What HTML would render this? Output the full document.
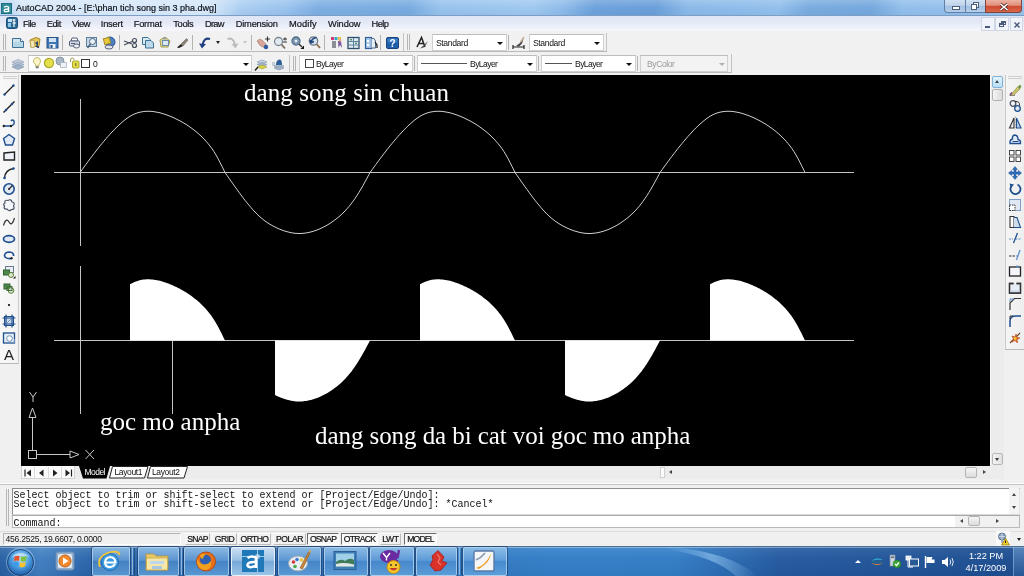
<!DOCTYPE html>
<html><head><meta charset="utf-8"><title>AutoCAD 2004</title>
<style>
*{box-sizing:border-box;margin:0;padding:0}
html,body{width:1024px;height:576px;overflow:hidden;background:#f0f0f0;font-family:"Liberation Sans",sans-serif;}
#root{position:relative;width:1024px;height:576px;overflow:hidden;will-change:transform;transform:translateZ(0)}
.abs{position:absolute}
svg{position:absolute;overflow:visible}
/* title bar */
#title{left:0;top:0;width:1024px;height:16px;background:
 linear-gradient(180deg,rgba(255,255,255,.18) 0,rgba(255,255,255,0) 50%,rgba(40,80,140,.06) 100%),
 linear-gradient(100deg,#c2dbf5 0,#bcd8f4 21%,#a5cbf0 25%,#9bc4ee 28%,#7fb0e3 31%,#7aace1 40%,#98c3ed 43%,#a0c9f0 52%,#8fbcea 55%,#6ea3dc 58%,#6ba0da 64%,#8bbae9 67%,#93c0ec 76%,#7aacdf 79%,#76a9de 85%,#92bfeb 88%,#98c4ee 100%);border-bottom:1px solid #7c9dc4}
#title .glow{left:10px;top:0;width:230px;height:15px;background:linear-gradient(90deg,rgba(236,245,253,0) 0,rgba(236,245,253,.55) 5%,rgba(236,245,253,.55) 85%,rgba(236,245,253,0) 100%)}
#title .txt{left:16px;top:3px;font-size:9px;line-height:11px;color:#10141a;white-space:nowrap;-webkit-text-stroke:.2px #10141a}
.wb{top:0;height:13px;border:1px solid #5f7fa6;border-top:none;}
/* menu */
#menu{left:0;top:16px;width:1024px;height:15px;background:linear-gradient(180deg,#dfe6f5 0%,#e3e8f6 40%,#eef1fa 75%,#f6f7fc 100%);}
#menu span{position:absolute;top:3px;font-size:9.3px;line-height:11px;color:#15171c;white-space:nowrap;-webkit-text-stroke:.2px #15171c}
/* toolbars */
#tb1{left:0;top:31px;width:1024px;height:22px;background:#f1f1f1}
#tb2{left:0;top:53px;width:1024px;height:22px;background:#f1f1f1}
.sepv{position:absolute;width:1px;background:#b4b4b4}
.grip{position:absolute;width:3px;border-left:1px solid #b6b6b6;border-right:1px solid #b6b6b6}
.dd{position:absolute;background:#fff;border:1px solid #d0d0d0;border-top-color:#bdbdbd;font-size:8.6px;line-height:10px;color:#111;white-space:nowrap}
.dd .t{position:absolute;top:3px}
.dd .ar{position:absolute;width:0;height:0;margin-left:-1px;border-left:3.5px solid transparent;border-right:3.5px solid transparent;border-top:3.5px solid #111}
/* drawing */
#draw{left:21px;top:75px;width:969px;height:391px;background:#000}
#lefttb{left:0;top:75px;width:21px;height:404px;background:#f0f0f0}
#vscroll{left:990px;top:75px;width:14px;height:391px;background:#ececec}
#righttb{left:1004px;top:75px;width:20px;height:404px;background:#f0f0f0}
#tabs{left:21px;top:466px;width:983px;height:13px;background:#ececec}
#cmd{left:0;top:479px;width:1024px;height:52px;background:#f0f0f0}
#status{left:0;top:531px;width:1024px;height:15px;background:#f0f0f0}
#task{left:0;top:546px;width:1024px;height:30px;background:linear-gradient(180deg,#6a9bd0 0%,#4a82c0 6%,#3470b4 40%,#2a64a8 100%);}
.ctext{font-family:"Liberation Serif",serif;color:#fff;white-space:nowrap;position:absolute;transform-origin:0 0}
.mono{font-family:"Liberation Mono",monospace;font-size:10px;line-height:10px;color:#111;white-space:pre;position:absolute}
.sb{position:absolute;top:2px;height:12px;font-size:8.6px;line-height:10px;color:#111;text-align:center;white-space:nowrap;border:1px solid;border-color:#fbfbfb #bdbdbd #bdbdbd #fbfbfb;-webkit-text-stroke:.2px #111}
.sb.on{border-color:#6a6a6a #fff #fff #6a6a6a;background:#f7f7f7}
.tbtn{position:absolute;top:1px;height:29px;border-radius:2px}
</style></head><body><div id="root">
<div id="title" class="abs"><div class="abs glow"></div>
<svg style="left:1px;top:3px" width="11" height="11" viewBox="0 0 11 11"><rect x="0" y="0" width="11" height="11" fill="#1f6f80"/><rect x="1" y="1" width="9" height="9" fill="#2f8a9a"/><path d="M3 4.2 Q5.5 2.5 7.6 4 V9 M7.6 6 Q3 5.8 3.2 7.8 Q3.6 9.4 7.6 8.2" stroke="#fff" stroke-width="1.3" fill="none"/></svg>
<div class="abs txt">AutoCAD 2004 - [E:\phan tich song sin 3 pha.dwg]</div>
<div class="abs wb" style="left:944px;width:22px;border-radius:0 0 0 4px;background:linear-gradient(180deg,#d3e2f2 0,#bfd3ea 45%,#a3bfe0 50%,#b4cfeb 100%)"><div class="abs" style="left:7px;top:6px;width:8px;height:4px;background:#fff;border:1px solid #4c5f78"></div></div>
<div class="abs wb" style="left:965px;width:21px;background:linear-gradient(180deg,#d3e2f2 0,#bfd3ea 45%,#a3bfe0 50%,#b4cfeb 100%)"><div class="abs" style="left:7px;top:2px;width:6px;height:6px;border:1px solid #4c5f78;background:#fff"></div><div class="abs" style="left:5px;top:4px;width:6px;height:6px;border:1px solid #4c5f78;background:#fff"></div></div>
<div class="abs wb" style="left:985px;width:37px;border-radius:0 0 4px 0;border-color:#7b453e;background:linear-gradient(180deg,#ecb3a3 0,#e08f7a 45%,#cf4a2f 50%,#d9674a 100%)"><svg style="left:13px;top:3px" width="10" height="8" viewBox="0 0 10 8"><path d="M1.5 1 L8.5 7 M8.5 1 L1.5 7" stroke="#5a2a26" stroke-width="3"/><path d="M1.5 1 L8.5 7 M8.5 1 L1.5 7" stroke="#fff" stroke-width="1.6"/></svg></div>
</div>
<div id="menu" class="abs"><svg style="left:6px;top:1px" width="12" height="12" viewBox="0 0 12 12"><rect x="0.5" y="0.5" width="11" height="11" rx="2" fill="#2a6a94" stroke="#1d4f74"/><rect x="2" y="2" width="4" height="3" fill="#bfe0f8"/><rect x="2" y="6" width="3" height="4" fill="#8cc6ee"/><path d="M6.5 3 L9.5 3 M8 2 V10 M6.5 6 H10" stroke="#fff" stroke-width="1.2"/></svg><span class="mi" style="letter-spacing:-0.58px;left:23px">File</span><span class="mi" style="letter-spacing:-0.51px;left:46.75px">Edit</span><span class="mi" style="letter-spacing:-0.49px;left:72px">View</span><span class="mi" style="letter-spacing:-0.2px;left:100.75px">Insert</span><span class="mi" style="letter-spacing:-0.24px;left:133.75px">Format</span><span class="mi" style="letter-spacing:-0.3px;left:173.25px">Tools</span><span class="mi" style="letter-spacing:-0.73px;left:205px">Draw</span><span class="mi" style="letter-spacing:-0.21px;left:235.75px">Dimension</span><span class="mi" style="letter-spacing:0.07px;left:289px">Modify</span><span class="mi" style="letter-spacing:-0.12px;left:328px">Window</span><span class="mi" style="letter-spacing:-0.54px;left:371.5px">Help</span><div class="abs" style="left:981px;top:1px;width:14px;height:14px;border:1px solid #cfd6e4;background:#f1f3fa"><div class="abs" style="left:3px;top:8px;width:5px;height:2px;background:#4a5a78"></div></div><div class="abs" style="left:995px;top:1px;width:14px;height:14px;border:1px solid #cfd6e4;background:#f1f3fa"><div class="abs" style="left:5px;top:3px;width:5px;height:4px;border:1px solid #4a5a78;border-top-width:2px"></div><div class="abs" style="left:3px;top:5px;width:5px;height:4px;border:1px solid #4a5a78;background:#f1f3fa;border-top-width:2px"></div></div><div class="abs" style="left:1010px;top:1px;width:13px;height:14px;border:1px solid #cfd6e4;background:#f1f3fa"><svg style="left:3px;top:4px" width="6" height="6" viewBox="0 0 6 6"><path d="M0.5 0.5 L5.5 5.5 M5.5 0.5 L0.5 5.5" stroke="#4a5a78" stroke-width="1.4"/></svg></div></div>
<div id="tb1" class="abs"><div class="grip" style="left:3px;top:3px;height:16px"></div><svg style="left:10px;top:4px" width="16" height="16" viewBox="0 0 16 16"><path d="M2.5 3.5 H10.5 L13.5 6.5 V12.5 H2.5Z" fill="#cfe3ee" stroke="#3c6f94"/><path d="M10.5 3.5 V6.5 H13.5" fill="#fff" stroke="#3c6f94"/><rect x="3.5" y="7" width="9" height="5" fill="#a9cfe0" opacity=".7"/></svg><svg style="left:27px;top:4px" width="16" height="16" viewBox="0 0 16 16"><path d="M3 5 L9 2.5 L13 4 L12 11 L4 12Z" fill="#e3c75a" stroke="#a78a2a"/><path d="M3 6 L7 5 L8 12 L4 12.5Z" fill="#f1e7b8" stroke="#a78a2a" stroke-width=".6"/><path d="M8 8 L11 6 L11 11Z" fill="#24457a"/><path d="M9 11 L12 12.5" stroke="#1d2d50" stroke-width="1.5"/></svg><svg style="left:44px;top:4px" width="16" height="16" viewBox="0 0 16 16"><rect x="3" y="2.5" width="11" height="10.5" fill="#3f76b5" stroke="#2a5389"/><rect x="5" y="3" width="7" height="4" fill="#cfe2f3"/><rect x="5.5" y="9" width="6" height="4" fill="#e7eef7"/><rect x="6.5" y="10" width="2" height="3" fill="#2a5389"/></svg><svg style="left:67px;top:4px" width="16" height="16" viewBox="0 0 16 16"><path d="M5 3 H10 L11 6 H4Z" fill="#fff" stroke="#55607a"/><rect x="2.5" y="6" width="10" height="5" rx="1" fill="#d7dbe6" stroke="#55607a"/><ellipse cx="9.5" cy="11" rx="3" ry="2" fill="#eef0f5" stroke="#55607a"/><rect x="4" y="8" width="4" height="1" fill="#55607a"/></svg><svg style="left:84px;top:4px" width="16" height="16" viewBox="0 0 16 16"><rect x="2.5" y="2.5" width="10" height="9" fill="#c7d9e8" stroke="#5c7f9e"/><circle cx="8.5" cy="6.5" r="3" fill="#e8f2fa" stroke="#50657c"/><path d="M6.5 9 L3.5 13" stroke="#50657c" stroke-width="1.6"/></svg><svg style="left:101px;top:4px" width="16" height="16" viewBox="0 0 16 16"><circle cx="9" cy="7" r="5" fill="#4a7fc0" stroke="#2b5590"/><rect x="3" y="3" width="6" height="6" fill="#e8c83a" stroke="#a18a25" transform="rotate(-15 6 6)"/><ellipse cx="8" cy="12" rx="4" ry="2" fill="#dfe3ee" stroke="#55607a"/></svg><svg style="left:123px;top:4px" width="16" height="16" viewBox="0 0 16 16"><path d="M1 6 L9 9 M1 10 L9 6.5" stroke="#444c5c" stroke-width="1.2"/><circle cx="11.5" cy="5.5" r="2" fill="none" stroke="#444c5c" stroke-width="1.2"/><circle cx="11.5" cy="10.5" r="2" fill="none" stroke="#444c5c" stroke-width="1.2"/></svg><svg style="left:140px;top:4px" width="16" height="16" viewBox="0 0 16 16"><path d="M2.5 2.5 H8 L10 4.5 V9.5 H2.5Z" fill="#dbe9f3" stroke="#3c6f94"/><path d="M5.5 5.5 H11 L13.5 8 V13 H5.5Z" fill="#bcd9ea" stroke="#3c6f94"/></svg><svg style="left:157px;top:4px" width="16" height="16" viewBox="0 0 16 16"><path d="M3 5 L8 2 L13 6 L11 12 L4 12Z" fill="#e6e0a8" stroke="#a59b48"/><rect x="5.5" y="5.5" width="6" height="5" fill="#dbe9f3" stroke="#6a8aa5"/><rect x="6" y="2.5" width="3.5" height="2" fill="#9aa3ad"/></svg><svg style="left:175px;top:4px" width="16" height="16" viewBox="0 0 16 16"><path d="M2 12.5 L6 9 L8 11 L4 13Z" fill="#222"/><path d="M6 9 L11.5 3.5 L13 5 L8 11Z" fill="#8a8378" stroke="#5c564c" stroke-width=".5"/></svg><svg style="left:197px;top:4px" width="16" height="16" viewBox="0 0 16 16"><path d="M13 4 Q7 2 5.5 10" fill="none" stroke="#1f3f80" stroke-width="2.2"/><path d="M2 8.5 L9 9 L5 13.5Z" fill="#1f3f80"/></svg><svg style="left:225px;top:4px" width="16" height="16" viewBox="0 0 16 16"><path d="M2.5 4 Q8.5 2 10 10" fill="none" stroke="#bdbdbd" stroke-width="2.2"/><path d="M13.5 8.5 L6.5 9 L10.5 13.5Z" fill="#bdbdbd"/></svg><svg style="left:255px;top:4px" width="16" height="16" viewBox="0 0 16 16"><path d="M2 6 Q4 3 7 5 L11 9 Q12 12 9 12.5 Q5 12 2 6Z" fill="#d9a79a" stroke="#a0756b" stroke-width=".6"/><circle cx="11" cy="12" r="2.2" fill="#2b5aa0"/><path d="M10 4 H15 M12.5 1.5 V6.5" stroke="#333" stroke-width="1.1"/></svg><svg style="left:272px;top:4px" width="16" height="16" viewBox="0 0 16 16"><circle cx="6.5" cy="6.5" r="4" fill="#dfeaf3" stroke="#7d8790" stroke-width="1.3"/><path d="M9.5 9.5 L13 13.5" stroke="#7a6a58" stroke-width="1.8"/><path d="M11 4 H15 M13 2.5 V5.5 M11 7 H15" stroke="#333" stroke-width="1"/></svg><svg style="left:290px;top:4px" width="16" height="16" viewBox="0 0 16 16"><circle cx="6" cy="6" r="4" fill="#a9c5de" stroke="#4e6c8c" stroke-width="1.3"/><rect x="4" y="4" width="4" height="4" fill="#e8f0f8" stroke="#35506f" stroke-width=".8"/><path d="M9 9 L12 12" stroke="#333" stroke-width="1.5"/><path d="M10.5 14 H14 V10.5Z" fill="#111"/></svg><svg style="left:307px;top:4px" width="16" height="16" viewBox="0 0 16 16"><circle cx="6.5" cy="6" r="4.2" fill="#d7e3ee" stroke="#6c7c8c" stroke-width="1.3"/><path d="M9.5 9 L13 13" stroke="#8a6a48" stroke-width="1.8"/><path d="M9.5 2.5 Q5 3 4 7.5 M3 5 L4 8 L7 6.5" fill="none" stroke="#21467e" stroke-width="1.5"/></svg><svg style="left:329px;top:4px" width="16" height="16" viewBox="0 0 16 16"><rect x="2" y="2" width="3" height="3" fill="#d43a7a"/><rect x="5.5" y="2" width="3" height="3" fill="#2fa7c9"/><rect x="9" y="2" width="3" height="3" fill="#e6c23a"/><rect x="3" y="6" width="4" height="7" fill="#8a9096"/><path d="M9 6 L12 6 L13 13 L11 10 L9.5 13Z" fill="#7d5aa0"/><circle cx="11" cy="5" r="1.5" fill="#e8b090"/></svg><svg style="left:346px;top:4px" width="16" height="16" viewBox="0 0 16 16"><rect x="2" y="2.5" width="11" height="11" fill="#dfe9f0" stroke="#2d4f6c" stroke-width="1.3"/><path d="M7.5 3 V13 M2.5 6.5 H13 M2.5 10 H13" stroke="#4d7a94" stroke-width=".9"/><rect x="4" y="4" width="2" height="1.5" fill="#5d8f6c"/><rect x="9" y="7.5" width="2" height="1.5" fill="#5d8f6c"/></svg><svg style="left:363px;top:4px" width="16" height="16" viewBox="0 0 16 16"><rect x="2.5" y="2.5" width="6" height="11" fill="#a9c7e8" stroke="#2f5f98" stroke-width="1.2"/><path d="M8.5 3.5 H11 L12.5 6 V13 H8.5" fill="#e8eef5" stroke="#4d6680"/><rect x="4" y="5" width="2" height="2" fill="#fff"/><rect x="4" y="9" width="2" height="2" fill="#fff"/><path d="M12 7 L14 10 V13" stroke="#222" stroke-width="1.3" fill="none"/></svg><svg style="left:385px;top:4px" width="16" height="16" viewBox="0 0 16 16"><rect x="1.5" y="2.5" width="12" height="11" rx="1.5" fill="#1f5fa8" stroke="#17467f"/><rect x="2.5" y="3.5" width="10" height="4" fill="#4a8ad0" opacity=".7"/><text x="7.5" y="12" font-family="Liberation Sans" font-weight="bold" font-size="10" fill="#fff" text-anchor="middle">?</text></svg><svg style="left:414px;top:4px" width="16" height="16" viewBox="0 0 16 16"><path d="M3 12 L7.5 2.5 L11 12 M4.8 8.5 H9.8" stroke="#222" stroke-width="1.5" fill="none"/><path d="M6 13.5 L9 11 L14 6 L12 9.5 L9.5 12.5Z" fill="#444"/></svg><svg style="left:511px;top:4px" width="16" height="16" viewBox="0 0 16 16"><path d="M2 12 H13 M2 10 V14 M13 10 V14" stroke="#222" stroke-width="1.2"/><path d="M5 11 L9 8 L13 2 L11 8.5 L8 11.5Z" fill="#444"/><path d="M9.5 7 L13 2" stroke="#c9b59c" stroke-width="1.5"/></svg><div class="sepv" style="left:62px;top:4px;height:15px"></div><div class="sepv" style="left:119px;top:4px;height:15px"></div><div class="sepv" style="left:192px;top:4px;height:15px"></div><div class="sepv" style="left:251px;top:4px;height:15px"></div><div class="sepv" style="left:324px;top:4px;height:15px"></div><div class="sepv" style="left:380px;top:4px;height:15px"></div><div class="abs" style="left:216px;top:10px;border-left:2.5px solid transparent;border-right:2.5px solid transparent;border-top:3px solid #222"></div><div class="abs" style="left:243px;top:10px;border-left:2.5px solid transparent;border-right:2.5px solid transparent;border-top:3px solid #c4c4c4"></div><div class="sepv" style="left:403px;top:2px;height:19px;background:#c4c4c4"></div><div class="grip" style="left:407px;top:3px;height:16px"></div><div class="dd" style="left:432px;top:3px;width:75px;height:17px"><span class="t dt" style="letter-spacing:-0.38px;left:3px">Standard</span><span class="ar" style="left:65px;top:7px"></span></div><div class="sepv" style="left:508px;top:4px;height:15px"></div><div class="dd" style="left:529px;top:3px;width:75px;height:17px"><span class="t dt" style="letter-spacing:-0.38px;left:3px">Standard</span><span class="ar" style="left:65px;top:7px"></span></div><div class="sepv" style="left:606px;top:2px;height:19px;background:#c4c4c4"></div><div class="abs" style="left:0;top:20px;width:607px;height:1px;background:#b9b9b9"></div></div>
<div id="tb2" class="abs"><div class="grip" style="left:3px;top:3px;height:15px"></div><svg style="left:10px;top:4px" width="16" height="16" viewBox="0 0 16 16"><path d="M2 5 L8 2.5 L14 5 L8 7.5Z" fill="#c7d3e0" stroke="#8496ac" stroke-width=".6"/><path d="M2 7.5 L8 5 L14 7.5 L8 10Z" fill="#b4c4d6" stroke="#8496ac" stroke-width=".6"/><path d="M2 10 L8 7.5 L14 10 L8 12.5Z" fill="#9fb3ca" stroke="#7f92aa" stroke-width=".6"/></svg><div class="dd" style="left:28px;top:2px;width:224px;height:17px"><svg style="left:3px;top:0px" width="10" height="14" viewBox="0 0 10 14"><path d="M5 1.5 Q8.5 1.5 8.5 5 Q8.5 7 7 8.5 V10 H3.5 V8.5 Q1.5 7 1.5 5 Q1.5 1.5 5 1.5Z" fill="#fbf6c8" stroke="#b5a94a" stroke-width=".8"/><rect x="3.7" y="10.3" width="3" height="2" fill="#777"/></svg><svg style="left:14px;top:1px" width="12" height="12" viewBox="0 0 12 12"><circle cx="6" cy="6" r="4.6" fill="#e4e04a" stroke="#a9a52e" stroke-width="1.2"/></svg><svg style="left:26px;top:0px" width="13" height="13" viewBox="0 0 13 13"><circle cx="5" cy="5" r="4" fill="#a9b7c4" stroke="#8797a7"/><rect x="5.5" y="6.5" width="6" height="5" fill="#eef1f5" stroke="#aab4bf" stroke-width=".8"/></svg><svg style="left:40px;top:1px" width="12" height="12" viewBox="0 0 12 12"><path d="M1.5 5 V3 Q1.5 1 3.5 1 Q5 1 5 3" fill="none" stroke="#9a9a52" stroke-width="1"/><rect x="3.5" y="4" width="6.5" height="7" rx="1" fill="#e3df4c" stroke="#a9a52e"/><rect x="6" y="6" width="1.5" height="3" fill="#8a8630"/></svg><div class="abs" style="left:52px;top:3px;width:9px;height:9px;border:1px solid #333;background:#fff"></div><span class="t" style="left:64px">0</span><span class="ar" style="left:215px;top:7px"></span></div><svg style="left:254px;top:4px" width="16" height="16" viewBox="0 0 16 16"><path d="M3 5 L8 3 L13 5 L8 7Z" fill="#c7d3e0" stroke="#8496ac" stroke-width=".6"/><path d="M3 7.5 L8 5.5 L13 7.5 L8 9.5Z" fill="#9fb3ca" stroke="#8496ac" stroke-width=".6"/><path d="M3 10 L8 8 L13 10 L8 12Z" fill="#d9d24a" stroke="#a39c2e" stroke-width=".6"/><path d="M1 13.5 L4 10" stroke="#222" stroke-width="1.4"/></svg><svg style="left:271px;top:4px" width="16" height="16" viewBox="0 0 16 16"><path d="M3 9 L8 7 L13 9 L8 11Z" fill="#b4c4d6" stroke="#8496ac" stroke-width=".6"/><path d="M3 11 L8 9 L13 11 L8 13Z" fill="#9fb3ca" stroke="#7f92aa" stroke-width=".6"/><path d="M5 8 Q5 2.5 9 2.5 Q11 3 11 8Z" fill="#2f5f98"/><path d="M1 6 H4 M1 8 H4" stroke="#8496ac" stroke-width=".8"/></svg><div class="sepv" style="left:289px;top:2px;height:18px;background:#c4c4c4"></div><div class="grip" style="left:293px;top:3px;height:15px"></div><div class="dd" style="left:299px;top:2px;width:114px;height:17px"><div class="abs" style="left:5px;top:3px;width:9px;height:9px;border:1px solid #444"></div><span class="t dt" style="letter-spacing:-0.59px;left:16px">ByLayer</span><span class="ar" style="left:104px;top:7px"></span></div><div class="sepv" style="left:414px;top:3px;height:15px"></div><div class="dd" style="left:417px;top:2px;width:120px;height:17px"><div class="abs" style="left:3px;top:7px;width:46px;height:1px;background:#555"></div><span class="t dt" style="letter-spacing:-0.59px;left:52px">ByLayer</span><span class="ar" style="left:110px;top:7px"></span></div><div class="sepv" style="left:538px;top:3px;height:15px"></div><div class="dd" style="left:541px;top:2px;width:95px;height:17px"><div class="abs" style="left:3px;top:7px;width:27px;height:1px;background:#555"></div><span class="t dt" style="letter-spacing:-0.59px;left:33px">ByLayer</span><span class="ar" style="left:85px;top:7px"></span></div><div class="sepv" style="left:637px;top:3px;height:15px"></div><div class="dd" style="left:640px;top:2px;width:88px;height:17px;background:#f3f3f3;color:#9a9a9a"><span class="t dt" style="letter-spacing:-0.43px;left:6px">ByColor</span><span class="ar" style="left:79px;top:7px;border-top-color:#b0b0b0"></span></div><div class="sepv" style="left:731px;top:1px;height:19px;background:#c4c4c4"></div><div class="abs" style="left:0;top:19px;width:732px;height:1px;background:#b9b9b9"></div></div>
<div id="lefttb" class="abs"><div class="abs" style="left:0;top:0;width:18px;height:288px;background:linear-gradient(90deg,#f8f8f8,#f3f3f3)"></div><div class="abs" style="left:3px;top:1px;width:14px;height:3px;border-top:1px solid #cfcfcf;border-bottom:1px solid #cfcfcf"></div><svg style="left:2px;top:8px" width="14" height="14" viewBox="0 0 14 14"><path d="M2.5 11.5 L11.5 2.5" stroke="#222" stroke-width="1.3"/><circle cx="2.5" cy="11.5" r="1.2" fill="#1f4f8f"/><circle cx="11.5" cy="2.5" r="1.2" fill="#1f4f8f"/></svg><svg style="left:2px;top:24.5px" width="14" height="14" viewBox="0 0 14 14"><path d="M1.5 12.5 L12.5 1.5" stroke="#222" stroke-width="1.5"/><circle cx="4" cy="10" r="1.2" fill="#1f4f8f"/><circle cx="10" cy="4" r="1.2" fill="#1f4f8f"/></svg><svg style="left:2px;top:41px" width="14" height="14" viewBox="0 0 14 14"><path d="M1.5 10 H9 Q13 9 12 5 Q10.5 3 9 5" fill="none" stroke="#1f4f8f" stroke-width="1.4"/><circle cx="1.8" cy="10" r="1.2" fill="#222"/><circle cx="9" cy="10" r="1.2" fill="#222"/></svg><svg style="left:2px;top:57.5px" width="14" height="14" viewBox="0 0 14 14"><path d="M7 1.5 L12.5 5.5 L10.5 12 H3.5 L1.5 5.5Z" fill="#dfe8f3" stroke="#1f4f8f" stroke-width="1.4"/></svg><svg style="left:2px;top:74px" width="14" height="14" viewBox="0 0 14 14"><path d="M2 4 L12.5 3 L12.5 11 L2 11Z" fill="#eef2f8" stroke="#222" stroke-width="1.4"/></svg><svg style="left:2px;top:90.5px" width="14" height="14" viewBox="0 0 14 14"><path d="M2.5 12 Q3 4 11.5 2.5" fill="none" stroke="#222" stroke-width="1.4"/><circle cx="2.5" cy="12" r="1.3" fill="#1f4f8f"/><circle cx="11.5" cy="2.5" r="1.3" fill="#1f4f8f"/></svg><svg style="left:2px;top:106.5px" width="14" height="14" viewBox="0 0 14 14"><circle cx="7" cy="7" r="5.2" fill="#dfe8f3" stroke="#1f4f8f" stroke-width="1.6"/><path d="M7 7 L10.5 3.5" stroke="#222" stroke-width="1.1"/><circle cx="7" cy="7" r="1" fill="#222"/></svg><svg style="left:2px;top:123px" width="14" height="14" viewBox="0 0 14 14"><path d="M3 5 Q2 1.5 6 2.5 Q9 0.5 10 4 Q13.5 4.5 11.5 8 Q13.5 11.5 9.5 11.5 Q7 14 5 11 Q1 11.5 2.5 8 Q0.5 6 3 5Z" fill="#f4f6f9" stroke="#4a5464" stroke-width="1.2"/></svg><svg style="left:2px;top:140px" width="14" height="14" viewBox="0 0 14 14"><path d="M1.5 10.5 Q4 2 7 7 Q10 12 12.5 3" fill="none" stroke="#333" stroke-width="1.2"/></svg><svg style="left:2px;top:156.5px" width="14" height="14" viewBox="0 0 14 14"><ellipse cx="7" cy="7" rx="5.5" ry="3.3" fill="#dfe8f3" stroke="#1f4f8f" stroke-width="1.7"/></svg><svg style="left:2px;top:173px" width="14" height="14" viewBox="0 0 14 14"><path d="M9 10.5 Q3 11 2.5 7.5 Q3 4 7.5 4 Q12 4.5 11.5 8" fill="none" stroke="#1f4f8f" stroke-width="1.7"/><circle cx="9.5" cy="10.3" r="1.2" fill="#222"/></svg><svg style="left:2px;top:190px" width="14" height="14" viewBox="0 0 14 14"><rect x="3.5" y="1.5" width="8" height="6" fill="#e8eef5" stroke="#6c7c8c"/><rect x="1.5" y="5" width="6" height="5" fill="#4f8a4f" stroke="#2f5f2f"/><circle cx="9" cy="10" r="2.5" fill="#dfe8d0" stroke="#5a7f3a"/><path d="M11 13.5 H13.5 V11Z" fill="#111"/></svg><svg style="left:2px;top:206px" width="14" height="14" viewBox="0 0 14 14"><rect x="2" y="3" width="6" height="5" fill="#4f8a4f" stroke="#2f5f2f"/><circle cx="9" cy="9.5" r="2.8" fill="#dfe8d0" stroke="#5a7f3a"/><rect x="5" y="5.5" width="5" height="4" fill="none" stroke="#3a6a3a"/></svg><svg style="left:2px;top:222.5px" width="14" height="14" viewBox="0 0 14 14"><rect x="6" y="6" width="2" height="2" fill="#333"/></svg><svg style="left:2px;top:239px" width="14" height="14" viewBox="0 0 14 14"><rect x="2.5" y="2.5" width="9" height="9" fill="#cfdcec" stroke="#1f4f8f" stroke-width="1"/><path d="M0.5 4 H13.5 M0.5 10 H13.5 M4 0.5 V13.5 M10 0.5 V13.5" stroke="#1f4f8f" stroke-width="1.2"/><path d="M3 7 L7 3 M3 11 L11 3 M7 11 L11 7" stroke="#5f83b5" stroke-width=".8"/></svg><svg style="left:2px;top:256px" width="14" height="14" viewBox="0 0 14 14"><rect x="1.5" y="2" width="11" height="10" fill="#e4edf6" stroke="#1f4f8f" stroke-width="1.3"/><circle cx="7.5" cy="7.5" r="2.8" fill="#fff" stroke="#6d8fb8"/><path d="M7 12 H12.5 V8" fill="none" stroke="#6d8fb8"/></svg><svg style="left:2px;top:272px" width="14" height="14" viewBox="0 0 14 14"><text x="7" y="13" font-family="Liberation Sans" font-size="15" fill="#222" text-anchor="middle">A</text></svg><div class="abs" style="left:0;top:288px;width:19px;height:1px;background:#b9b9b9"></div><div class="abs" style="left:18px;top:0;width:1px;height:289px;background:#cdcdcd"></div></div>
<div id="draw" class="abs">
<svg style="left:-21px;top:-75px" width="1024" height="576" viewBox="0 0 1024 576">
<g stroke="#c4c4c4" stroke-width="1" fill="none" shape-rendering="crispEdges">
<line x1="80.5" y1="99" x2="80.5" y2="246"/>
<line x1="54" y1="172.5" x2="854" y2="172.5"/>
<line x1="80.5" y1="266" x2="80.5" y2="414"/>
<line x1="54" y1="340.5" x2="854" y2="340.5"/>
<line x1="172.5" y1="340" x2="172.5" y2="414"/>
</g>
<path d="M80.0,172.5 82.0,169.8 84.0,167.0 86.0,164.3 88.0,161.6 90.0,158.9 92.0,156.2 94.0,153.6 96.0,151.0 98.0,148.4 100.0,145.9 102.0,143.5 104.0,141.1 106.0,138.7 108.0,136.4 110.0,134.2 112.0,132.0 114.0,129.9 116.0,127.9 118.0,125.9 120.0,124.1 122.0,122.3 124.0,120.6 126.0,119.0 128.0,117.6 130.0,116.3 132.0,115.2 134.0,114.2 136.0,113.4 138.0,112.7 140.0,112.2 142.0,111.8 144.0,111.5 146.0,111.3 148.0,111.3 150.0,111.3 152.0,111.4 154.0,111.7 156.0,112.0 158.0,112.4 160.0,112.8 162.0,113.4 164.0,114.0 166.0,114.7 168.0,115.4 170.0,116.2 172.0,117.0 174.0,117.9 176.0,118.9 178.0,119.9 180.0,120.9 182.0,122.0 184.0,123.2 186.0,124.4 188.0,125.7 190.0,127.1 192.0,128.5 194.0,130.0 196.0,131.6 198.0,133.3 200.0,135.1 202.0,137.0 204.0,139.0 206.0,141.2 208.0,143.5 210.0,146.0 212.0,148.7 214.0,151.7 216.0,155.0 218.0,158.6 220.0,162.4 222.0,166.4 224.0,170.4 225.0,172.5 227.0,175.4 229.0,178.2 231.0,181.1 233.0,183.9 235.0,186.8 237.0,189.5 239.0,192.3 241.0,195.0 243.0,197.7 245.0,200.3 247.0,202.8 249.0,205.2 251.0,207.6 253.0,209.9 255.0,212.0 257.0,214.1 259.0,216.0 261.0,217.8 263.0,219.4 265.0,221.0 267.0,222.4 269.0,223.7 271.0,224.9 273.0,226.0 275.0,227.0 277.0,228.0 279.0,228.9 281.0,229.7 283.0,230.5 285.0,231.1 287.0,231.7 289.0,232.2 291.0,232.7 293.0,233.0 295.0,233.3 297.0,233.4 299.0,233.5 301.0,233.5 303.0,233.3 305.0,233.1 307.0,232.8 309.0,232.4 311.0,231.9 313.0,231.4 315.0,230.7 317.0,230.0 319.0,229.2 321.0,228.3 323.0,227.3 325.0,226.3 327.0,225.2 329.0,224.0 331.0,222.7 333.0,221.3 335.0,219.8 337.0,218.3 339.0,216.7 341.0,214.9 343.0,213.0 345.0,211.0 347.0,208.8 349.0,206.5 351.0,204.0 353.0,201.3 355.0,198.5 357.0,195.5 359.0,192.3 361.0,189.0 363.0,185.5 365.0,181.9 367.0,178.2 369.0,174.4 370.0,172.5 372.0,169.8 374.0,167.0 376.0,164.3 378.0,161.6 380.0,158.9 382.0,156.2 384.0,153.6 386.0,151.0 388.0,148.4 390.0,145.9 392.0,143.5 394.0,141.1 396.0,138.7 398.0,136.4 400.0,134.2 402.0,132.0 404.0,129.9 406.0,127.9 408.0,125.9 410.0,124.1 412.0,122.3 414.0,120.6 416.0,119.0 418.0,117.6 420.0,116.3 422.0,115.2 424.0,114.2 426.0,113.4 428.0,112.7 430.0,112.2 432.0,111.8 434.0,111.5 436.0,111.3 438.0,111.3 440.0,111.3 442.0,111.4 444.0,111.7 446.0,112.0 448.0,112.4 450.0,112.8 452.0,113.4 454.0,114.0 456.0,114.7 458.0,115.4 460.0,116.2 462.0,117.0 464.0,117.9 466.0,118.9 468.0,119.9 470.0,120.9 472.0,122.0 474.0,123.2 476.0,124.4 478.0,125.7 480.0,127.1 482.0,128.5 484.0,130.0 486.0,131.6 488.0,133.3 490.0,135.1 492.0,137.0 494.0,139.0 496.0,141.2 498.0,143.5 500.0,146.0 502.0,148.7 504.0,151.7 506.0,155.0 508.0,158.6 510.0,162.4 512.0,166.4 514.0,170.4 515.0,172.5 517.0,175.4 519.0,178.2 521.0,181.1 523.0,183.9 525.0,186.8 527.0,189.5 529.0,192.3 531.0,195.0 533.0,197.7 535.0,200.3 537.0,202.8 539.0,205.2 541.0,207.6 543.0,209.9 545.0,212.0 547.0,214.1 549.0,216.0 551.0,217.8 553.0,219.4 555.0,221.0 557.0,222.4 559.0,223.7 561.0,224.9 563.0,226.0 565.0,227.0 567.0,228.0 569.0,228.9 571.0,229.7 573.0,230.5 575.0,231.1 577.0,231.7 579.0,232.2 581.0,232.7 583.0,233.0 585.0,233.3 587.0,233.4 589.0,233.5 591.0,233.5 593.0,233.3 595.0,233.1 597.0,232.8 599.0,232.4 601.0,231.9 603.0,231.4 605.0,230.7 607.0,230.0 609.0,229.2 611.0,228.3 613.0,227.3 615.0,226.3 617.0,225.2 619.0,224.0 621.0,222.7 623.0,221.3 625.0,219.8 627.0,218.3 629.0,216.7 631.0,214.9 633.0,213.0 635.0,211.0 637.0,208.8 639.0,206.5 641.0,204.0 643.0,201.3 645.0,198.5 647.0,195.5 649.0,192.3 651.0,189.0 653.0,185.5 655.0,181.9 657.0,178.2 659.0,174.4 660.0,172.5 662.0,169.8 664.0,167.0 666.0,164.3 668.0,161.6 670.0,158.9 672.0,156.2 674.0,153.6 676.0,151.0 678.0,148.4 680.0,145.9 682.0,143.5 684.0,141.1 686.0,138.7 688.0,136.4 690.0,134.2 692.0,132.0 694.0,129.9 696.0,127.9 698.0,125.9 700.0,124.1 702.0,122.3 704.0,120.6 706.0,119.0 708.0,117.6 710.0,116.3 712.0,115.2 714.0,114.2 716.0,113.4 718.0,112.7 720.0,112.2 722.0,111.8 724.0,111.5 726.0,111.3 728.0,111.3 730.0,111.3 732.0,111.4 734.0,111.7 736.0,112.0 738.0,112.4 740.0,112.8 742.0,113.4 744.0,114.0 746.0,114.7 748.0,115.4 750.0,116.2 752.0,117.0 754.0,117.9 756.0,118.9 758.0,119.9 760.0,120.9 762.0,122.0 764.0,123.2 766.0,124.4 768.0,125.7 770.0,127.1 772.0,128.5 774.0,130.0 776.0,131.6 778.0,133.3 780.0,135.1 782.0,137.0 784.0,139.0 786.0,141.2 788.0,143.5 790.0,146.0 792.0,148.7 794.0,151.7 796.0,155.0 798.0,158.6 800.0,162.4 802.0,166.4 804.0,170.4 805.0,172.5" stroke="#cfcfcf" stroke-width="1" fill="none"/>
<path d="M130.0,340.5 L130.0,284.3 131.5,283.5 133.0,282.7 134.5,282.0 136.0,281.4 137.5,280.9 139.0,280.4 140.5,280.1 142.0,279.8 143.5,279.5 145.0,279.4 146.5,279.3 148.0,279.3 149.5,279.3 151.0,279.4 152.5,279.5 154.0,279.7 155.5,279.9 157.0,280.2 158.5,280.5 160.0,280.8 161.5,281.3 163.0,281.7 164.5,282.2 166.0,282.7 167.5,283.2 169.0,283.8 170.5,284.4 172.0,285.0 173.5,285.7 175.0,286.4 176.5,287.1 178.0,287.9 179.5,288.6 181.0,289.5 182.5,290.3 184.0,291.2 185.5,292.1 187.0,293.0 188.5,294.0 190.0,295.1 191.5,296.1 193.0,297.2 194.5,298.4 196.0,299.6 197.5,300.8 199.0,302.1 200.5,303.5 202.0,305.0 203.5,306.5 205.0,308.1 206.5,309.7 208.0,311.5 209.5,313.4 211.0,315.3 212.5,317.5 214.0,319.7 215.5,322.2 217.0,324.7 218.5,327.5 220.0,330.4 221.5,333.3 223.0,336.4 224.5,339.5 225.0,340.5Z M275.0,340.5 L275.0,395.0 276.5,395.8 278.0,396.5 279.5,397.1 281.0,397.7 282.5,398.3 284.0,398.8 285.5,399.3 287.0,399.7 288.5,400.1 290.0,400.5 291.5,400.8 293.0,401.0 294.5,401.2 296.0,401.4 297.5,401.5 299.0,401.5 300.5,401.5 302.0,401.4 303.5,401.3 305.0,401.1 306.5,400.9 308.0,400.6 309.5,400.3 311.0,399.9 312.5,399.5 314.0,399.1 315.5,398.6 317.0,398.0 318.5,397.4 320.0,396.8 321.5,396.1 323.0,395.3 324.5,394.6 326.0,393.7 327.5,392.9 329.0,392.0 330.5,391.0 332.0,390.0 333.5,388.9 335.0,387.8 336.5,386.7 338.0,385.5 339.5,384.2 341.0,382.9 342.5,381.5 344.0,380.0 345.5,378.5 347.0,376.8 348.5,375.1 350.0,373.3 351.5,371.4 353.0,369.3 354.5,367.2 356.0,365.0 357.5,362.7 359.0,360.3 360.5,357.8 362.0,355.3 363.5,352.6 365.0,349.9 366.5,347.1 368.0,344.3 369.5,341.4 370.0,340.5Z M420.0,340.5 L420.0,284.3 421.5,283.5 423.0,282.7 424.5,282.0 426.0,281.4 427.5,280.9 429.0,280.4 430.5,280.1 432.0,279.8 433.5,279.5 435.0,279.4 436.5,279.3 438.0,279.3 439.5,279.3 441.0,279.4 442.5,279.5 444.0,279.7 445.5,279.9 447.0,280.2 448.5,280.5 450.0,280.8 451.5,281.3 453.0,281.7 454.5,282.2 456.0,282.7 457.5,283.2 459.0,283.8 460.5,284.4 462.0,285.0 463.5,285.7 465.0,286.4 466.5,287.1 468.0,287.9 469.5,288.6 471.0,289.5 472.5,290.3 474.0,291.2 475.5,292.1 477.0,293.0 478.5,294.0 480.0,295.1 481.5,296.1 483.0,297.2 484.5,298.4 486.0,299.6 487.5,300.8 489.0,302.1 490.5,303.5 492.0,305.0 493.5,306.5 495.0,308.1 496.5,309.7 498.0,311.5 499.5,313.4 501.0,315.3 502.5,317.5 504.0,319.7 505.5,322.2 507.0,324.7 508.5,327.5 510.0,330.4 511.5,333.3 513.0,336.4 514.5,339.5 515.0,340.5Z M565.0,340.5 L565.0,395.0 566.5,395.8 568.0,396.5 569.5,397.1 571.0,397.7 572.5,398.3 574.0,398.8 575.5,399.3 577.0,399.7 578.5,400.1 580.0,400.5 581.5,400.8 583.0,401.0 584.5,401.2 586.0,401.4 587.5,401.5 589.0,401.5 590.5,401.5 592.0,401.4 593.5,401.3 595.0,401.1 596.5,400.9 598.0,400.6 599.5,400.3 601.0,399.9 602.5,399.5 604.0,399.1 605.5,398.6 607.0,398.0 608.5,397.4 610.0,396.8 611.5,396.1 613.0,395.3 614.5,394.6 616.0,393.7 617.5,392.9 619.0,392.0 620.5,391.0 622.0,390.0 623.5,388.9 625.0,387.8 626.5,386.7 628.0,385.5 629.5,384.2 631.0,382.9 632.5,381.5 634.0,380.0 635.5,378.5 637.0,376.8 638.5,375.1 640.0,373.3 641.5,371.4 643.0,369.3 644.5,367.2 646.0,365.0 647.5,362.7 649.0,360.3 650.5,357.8 652.0,355.3 653.5,352.6 655.0,349.9 656.5,347.1 658.0,344.3 659.5,341.4 660.0,340.5Z M710.0,340.5 L710.0,284.3 711.5,283.5 713.0,282.7 714.5,282.0 716.0,281.4 717.5,280.9 719.0,280.4 720.5,280.1 722.0,279.8 723.5,279.5 725.0,279.4 726.5,279.3 728.0,279.3 729.5,279.3 731.0,279.4 732.5,279.5 734.0,279.7 735.5,279.9 737.0,280.2 738.5,280.5 740.0,280.8 741.5,281.3 743.0,281.7 744.5,282.2 746.0,282.7 747.5,283.2 749.0,283.8 750.5,284.4 752.0,285.0 753.5,285.7 755.0,286.4 756.5,287.1 758.0,287.9 759.5,288.6 761.0,289.5 762.5,290.3 764.0,291.2 765.5,292.1 767.0,293.0 768.5,294.0 770.0,295.1 771.5,296.1 773.0,297.2 774.5,298.4 776.0,299.6 777.5,300.8 779.0,302.1 780.5,303.5 782.0,305.0 783.5,306.5 785.0,308.1 786.5,309.7 788.0,311.5 789.5,313.4 791.0,315.3 792.5,317.5 794.0,319.7 795.5,322.2 797.0,324.7 798.5,327.5 800.0,330.4 801.5,333.3 803.0,336.4 804.5,339.5 805.0,340.5Z" fill="#fff" stroke="none"/>
<g stroke="#c8c8c8" stroke-width="1" fill="none">
<path d="M32.5 451 V417 M29 417.5 H36 L32.5 408Z"/>
<rect x="28.500" y="450.500" width="8" height="8"/>
<path d="M37 454.500 H70 M70 451 V458 L79 454.500Z"/>
<path d="M29.500 392 L33 397 L36.500 392 M33 397 V402"/>
<path d="M85.500 450 L94 459 M94 450 L85.500 459"/>
</g>
</svg>
<div class="ctext" id="t1" style="left:223px;top:4px;font-size:25px;line-height:28px;letter-spacing:0.08px">dang song sin chuan</div>
<div class="ctext" id="t2" style="left:79px;top:333px;font-size:25px;line-height:28px">goc mo anpha</div>
<div class="ctext" id="t3" style="left:294px;top:347px;font-size:25px;line-height:28px;letter-spacing:-0.07px">dang song da bi cat voi goc mo anpha</div>
</div>
<div id="vscroll" class="abs">
<div class="abs" style="left:0;top:0;width:1px;height:391px;background:#f7f7f7"></div>
<div class="abs" style="left:2px;top:1px;width:11px;height:12px;border:1px solid #7fb2d8;border-radius:2px;background:linear-gradient(180deg,#e3f3fc,#b9def5)"><div class="abs" style="left:2px;top:3px;border-left:2.5px solid transparent;border-right:2.5px solid transparent;border-bottom:3px solid #3a4a5a"></div></div>
<div class="abs" style="left:2px;top:14px;width:11px;height:12px;border:1px solid #b0b0b0;border-radius:2px;background:linear-gradient(90deg,#f4f4f4,#dcdcdc)"></div>
<div class="abs" style="left:2px;top:378px;width:11px;height:12px;border:1px solid #b8b8b8;border-radius:2px;background:linear-gradient(90deg,#f4f4f4,#e0e0e0)"><div class="abs" style="left:2px;top:4px;border-left:2.5px solid transparent;border-right:2.5px solid transparent;border-top:3px solid #3a3a3a"></div></div>
</div>
<div id="righttb" class="abs"><div class="abs" style="left:1px;top:0;width:1px;height:274px;background:#c9c9c9"></div><div class="abs" style="left:2px;top:0;width:18px;height:274px;background:linear-gradient(90deg,#f5f5f5,#eeeeee)"></div><div class="abs" style="left:4px;top:1px;width:14px;height:3px;border-top:1px solid #cfcfcf;border-bottom:1px solid #cfcfcf"></div><svg style="left:4px;top:8px" width="14" height="14" viewBox="0 0 14 14"><path d="M1.500 12.500 H7" stroke="#888" stroke-width="1"/><path d="M3 11.500 L9.500 4 L12 6 L5.500 12.500Z" fill="#c9c36a" stroke="#8a8440" stroke-width=".6"/><path d="M9.500 4 L12 1.500 L13.500 3.500 L12 6Z" fill="#7a9a4a"/><path d="M2 12 L4 9.500" stroke="#7a4a7a" stroke-width="1.500"/></svg><svg style="left:4px;top:24px" width="14" height="14" viewBox="0 0 14 14"><circle cx="5" cy="4.500" r="2.800" fill="none" stroke="#4a5464" stroke-width="1.300"/><circle cx="9.500" cy="9.500" r="2.800" fill="#dfe8f3" stroke="#1f4f8f" stroke-width="1.300"/><path d="M7 2.500 Q12 2 11.500 6.500" fill="none" stroke="#333" stroke-width="1"/></svg><svg style="left:4px;top:40.5px" width="14" height="14" viewBox="0 0 14 14"><path d="M6 2 L6 12 L1.500 12Z" fill="#e8eef5" stroke="#333" stroke-width="1.100"/><path d="M8.500 2 L8.500 12 L13 12Z" fill="#b9cde6" stroke="#1f4f8f" stroke-width="1.100"/><path d="M7.250 0.500 V13.500" stroke="#888" stroke-width=".7" stroke-dasharray="1.500 1"/></svg><svg style="left:4px;top:57px" width="14" height="14" viewBox="0 0 14 14"><path d="M2 11.500 H12.500 Q13 8 10 7.500 Q10 3 6.500 3 Q4 3.500 4.500 7 Q1.500 7.500 2 11.500Z" fill="#dfe8f3" stroke="#1f4f8f" stroke-width="1.300"/><path d="M4.500 9.500 H10.500" stroke="#1f4f8f" stroke-width="1"/></svg><svg style="left:4px;top:74px" width="14" height="14" viewBox="0 0 14 14"><rect x="1.500" y="1.500" width="4.500" height="4.500" fill="#fff" stroke="#333" stroke-width="0.9"/><rect x="8" y="1.500" width="4.500" height="4.500" fill="#fff" stroke="#333" stroke-width="0.9"/><rect x="1.500" y="8" width="4.500" height="4.500" fill="#fff" stroke="#333" stroke-width="0.9"/><rect x="8" y="8" width="4.500" height="4.500" fill="#fff" stroke="#333" stroke-width="0.9"/></svg><svg style="left:4px;top:90.5px" width="14" height="14" viewBox="0 0 14 14"><path d="M7 0.500 L9.500 3.500 H8 V6 H10.500 V4.500 L13.500 7 L10.500 9.500 V8 H8 V10.500 H9.500 L7 13.500 L4.500 10.500 H6 V8 H3.500 V9.500 L0.500 7 L3.500 4.500 V6 H6 V3.500 H4.500Z" fill="#2f6fc0" stroke="#1f4f8f" stroke-width=".5"/></svg><svg style="left:4px;top:106.5px" width="14" height="14" viewBox="0 0 14 14"><path d="M9.500 2.500 A5 5 0 1 1 3.500 4" fill="none" stroke="#1f4f8f" stroke-width="1.800"/><path d="M1.500 1.500 L6 2.500 L3 6Z" fill="#1f4f8f"/></svg><svg style="left:4px;top:123px" width="14" height="14" viewBox="0 0 14 14"><rect x="1.500" y="1.500" width="11" height="11" fill="#dfe8f3" stroke="#7f9fc4" stroke-width="1"/><rect x="1.500" y="7" width="5.500" height="5.500" fill="#fff" stroke="#333" stroke-width="1" stroke-dasharray="1.500 1"/></svg><svg style="left:4px;top:139.5px" width="14" height="14" viewBox="0 0 14 14"><path d="M2 1.500 H6 V12.500 H2Z" fill="#fff" stroke="#333" stroke-width="1.100"/><path d="M6 2.500 L9 2.500 L12.500 12.500 H6" fill="#cfdcec" stroke="#1f4f8f" stroke-width="1.100"/></svg><svg style="left:4px;top:156px" width="14" height="14" viewBox="0 0 14 14"><path d="M1 8 H5 M7.500 8 H13" stroke="#5f8fc8" stroke-width="1.200" stroke-dasharray="2 1"/><path d="M9.500 2 L5.500 12" stroke="#1f4f8f" stroke-width="1.300"/></svg><svg style="left:4px;top:172.5px" width="14" height="14" viewBox="0 0 14 14"><path d="M1 8 H8" stroke="#333" stroke-width="1.200" stroke-dasharray="2.500 1"/><path d="M12 2 L8.500 12" stroke="#5f8fc8" stroke-width="1.300"/><path d="M8 8 H10" stroke="#5f8fc8" stroke-width="1"/></svg><svg style="left:4px;top:189px" width="14" height="14" viewBox="0 0 14 14"><rect x="1.500" y="3" width="11" height="9" fill="#f4f6f9" stroke="#222" stroke-width="1.300"/><rect x="8.500" y="1.500" width="2" height="2.500" fill="#5f8fc8"/></svg><svg style="left:4px;top:205.5px" width="14" height="14" viewBox="0 0 14 14"><path d="M5.500 2.500 H1.500 V12 H12.500 V2.500 H8.500" fill="#e8eef5" stroke="#333" stroke-width="1.300"/><path d="M1.500 9 H12.500 V12 H1.500Z" fill="#cfdcec" stroke="none"/><path d="M5.500 2.500 H1.500 V12 H12.500 V2.500 H8.500" fill="none" stroke="#333" stroke-width="1.300"/></svg><svg style="left:4px;top:221.5px" width="14" height="14" viewBox="0 0 14 14"><path d="M2 13 V6 L6.500 1.500 H13" fill="none" stroke="#333" stroke-width="1.200"/><path d="M2 2 H6 M2 2 V5" stroke="#5f8fc8" stroke-width="1" /></svg><svg style="left:4px;top:238.5px" width="14" height="14" viewBox="0 0 14 14"><path d="M2 13 V7 Q2 2 8 2 H13" fill="none" stroke="#1f4f8f" stroke-width="1.500"/><path d="M2 2 H5 M2 2 V5" stroke="#333" stroke-width="1"/></svg><svg style="left:4px;top:255.5px" width="14" height="14" viewBox="0 0 14 14"><path d="M2 12 L6 8 M8 6 L12 2" stroke="#6a4a2a" stroke-width="1.200"/><path d="M4 5 L7 6 L8 3 L9 6.500 L12 7 L9 8.500 L9.500 12 L7 9.500 L4 11 L5.500 8Z" fill="#e8792a" stroke="#b0401a" stroke-width=".6"/><circle cx="7" cy="7.500" r="1.300" fill="#f6d23a"/></svg><div class="abs" style="left:1px;top:274px;width:19px;height:1px;background:#b9b9b9"></div></div>
<div id="tabs" class="abs"><div class="abs" style="left:0;top:0;width:54px;height:13px;background:#fafafa;border:1px solid #d4d4d4;border-top:none"></div><svg style="left:2.0px;top:2px" width="10" height="10" viewBox="0 0 10 10"><path d="M2 1.500 V8.500" stroke="#222" stroke-width="1.200"/><path d="M8 1.500 L3.500 5 L8 8.500Z" fill="#222"/></svg><svg style="left:15.3px;top:2px" width="10" height="10" viewBox="0 0 10 10"><path d="M7.500 1.500 L3 5 L7.500 8.500Z" fill="#222"/></svg><div class="abs" style="left:13px;top:1px;width:1px;height:11px;background:#dcdcdc"></div><svg style="left:28.6px;top:2px" width="10" height="10" viewBox="0 0 10 10"><path d="M3 1.500 L7.500 5 L3 8.500Z" fill="#222"/></svg><div class="abs" style="left:27px;top:1px;width:1px;height:11px;background:#dcdcdc"></div><svg style="left:41.900000000000006px;top:2px" width="10" height="10" viewBox="0 0 10 10"><path d="M8.500 1.500 V8.500" stroke="#222" stroke-width="1.200"/><path d="M2.500 1.500 L7 5 L2.500 8.500Z" fill="#222"/></svg><div class="abs" style="left:40px;top:1px;width:1px;height:11px;background:#dcdcdc"></div><svg style="left:0;top:0" width="200" height="13" viewBox="21 466 200 13"><path d="M79 466 H110 L106.500 478.500 H83Z" fill="#000"/><path d="M112.500 466.500 H148 L144.500 478 H109.500Z" fill="#fff" stroke="#222" stroke-width="1"/><path d="M150.500 466.500 H187.500 L184 478 H147.500Z" fill="#fff" stroke="#222" stroke-width="1"/></svg><span class="abs tabt" style="letter-spacing:-0.54px;left:63.500px;top:1px;font-size:8.500px;line-height:10px;color:#fff">Model</span><span class="abs tabt" style="letter-spacing:-0.38px;left:93.500px;top:1px;font-size:8.500px;line-height:10px;color:#111">Layout1</span><span class="abs tabt" style="letter-spacing:-0.38px;left:131px;top:1px;font-size:8.500px;line-height:10px;color:#111">Layout2</span><div class="abs" style="left:639px;top:1px;width:5px;height:11px;background:#fdfdfd;border:1px solid #cfcfcf"></div><div class="abs" style="left:648px;top:4px;border-top:2.500px solid transparent;border-bottom:2.500px solid transparent;border-right:3px solid #444"></div><div class="abs" style="left:944px;top:1px;width:12px;height:11px;border:1px solid #b4b4b4;border-radius:2px;background:linear-gradient(180deg,#f6f6f6,#dcdcdc)"></div><div class="abs" style="left:962px;top:4px;border-top:2.500px solid transparent;border-bottom:2.500px solid transparent;border-left:3px solid #444"></div></div>
<div id="cmd" class="abs"><div class="abs" style="left:0;top:4px;width:1024px;height:1px;background:#fdfdfd"></div><div class="abs" style="left:0;top:5px;width:1024px;height:1px;background:#c4c4c4"></div><div class="grip" style="left:6px;top:10px;height:37px"></div><div class="abs" style="left:12px;top:9px;width:1008px;height:27px;background:#fff;border:1px solid #8f8f8f;border-bottom-color:#d9d9d9;border-right-color:#e4e4e4"></div><div class="abs" style="left:1009px;top:9px;width:10px;height:26px;background:#f4f4f4"></div><div class="abs" style="left:1012px;top:14px;border-left:2.500px solid transparent;border-right:2.500px solid transparent;border-bottom:3px solid #444"></div><div class="abs" style="left:1012px;top:27px;border-left:2.500px solid transparent;border-right:2.500px solid transparent;border-top:3px solid #444"></div><div class="mono" style="left:13.500px;top:11.500px">Select object to trim or shift-select to extend or [Project/Edge/Undo]:</div><div class="mono" style="left:13.500px;top:21px">Select object to trim or shift-select to extend or [Project/Edge/Undo]: *Cancel*</div><div class="abs" style="left:12px;top:36px;width:1008px;height:13px;background:#fff;border:1px solid #b9b9b9;border-top-color:#a9a9a9"></div><div class="mono" style="left:13.500px;top:39.500px">Command:</div><div class="abs" style="left:955px;top:37px;width:64px;height:11px;background:#f1f1f1"></div><div class="abs" style="left:960px;top:40px;border-top:2.500px solid transparent;border-bottom:2.500px solid transparent;border-right:3px solid #444"></div><div class="abs" style="left:968px;top:37px;width:12px;height:10px;border:1px solid #b4b4b4;border-radius:2px;background:linear-gradient(180deg,#f6f6f6,#dcdcdc)"></div><div class="abs" style="left:996px;top:40px;border-top:2.500px solid transparent;border-bottom:2.500px solid transparent;border-left:3px solid #444"></div></div>
<div id="status" class="abs"><div class="abs" style="left:0;top:0;width:1024px;height:1px;background:#dcdcdc"></div><div class="abs" style="left:3px;top:2px;width:178px;height:12px;border:1px solid #b4b4b4;border-right-color:#fdfdfd;border-bottom-color:#fdfdfd"></div><span class="abs stt" style="letter-spacing:-0.26px;left:5.500px;top:3px;font-size:8.600px;line-height:10px;color:#111;white-space:nowrap">456.2525, 19.6607, 0.0000</span><div class="sb" style="left:185px;width:25px"><span class="sbt" style="letter-spacing:-0.72px">SNAP</span></div><div class="sb" style="left:212px;width:25px"><span class="sbt" style="letter-spacing:-0.49px">GRID</span></div><div class="sb" style="left:238px;width:33px"><span class="sbt" style="letter-spacing:-0.6px">ORTHO</span></div><div class="sb" style="left:273px;width:33px"><span class="sbt" style="letter-spacing:-0.47px">POLAR</span></div><div class="sb on" style="left:307px;width:32px"><span class="sbt" style="letter-spacing:-0.77px">OSNAP</span></div><div class="sb on" style="left:341px;width:37px"><span class="sbt" style="letter-spacing:-0.76px">OTRACK</span></div><div class="sb" style="left:380px;width:21px"><span class="sbt" style="letter-spacing:-0.38px">LWT</span></div><div class="sb on" style="left:404px;width:33px"><span class="sbt" style="letter-spacing:-0.83px">MODEL</span></div><div class="abs" style="left:996px;top:0;width:14px;height:15px;background:#fafafa"></div><svg style="left:997px;top:1px" width="14" height="14" viewBox="0 0 14 14"><circle cx="5" cy="4.500" r="3.500" fill="#8fa3c0" stroke="#5f7394"/><path d="M5 1 V8 M2 4.500 H8" stroke="#dfe8f3" stroke-width=".7"/><path d="M5 8 V11" stroke="#5f7394"/><path d="M4.500 13 L8.500 6 L12.500 13Z" fill="#f2cf2a" stroke="#8a7410" stroke-width=".7"/><path d="M8.500 8.500 V11" stroke="#222" stroke-width="1"/></svg><div class="abs" style="left:1017px;top:7px;border-left:2.500px solid transparent;border-right:2.500px solid transparent;border-top:3px solid #222"></div></div>
<div id="task" class="abs"><div class="abs" style="left:0;top:0;width:1024px;height:30px;background:linear-gradient(90deg,rgba(20,60,120,.25) 0,rgba(120,180,235,.25) 4%,rgba(20,60,120,.15) 9%,rgba(50,120,200,.2) 30%,rgba(60,150,225,.45) 55%,rgba(60,150,225,.4) 66%,rgba(20,60,130,.35) 76%,rgba(15,50,110,.5) 100%)"></div><div class="abs" style="left:0;top:0;width:1024px;height:1px;background:#4c6f94"></div><div class="abs" style="left:0;top:1px;width:1024px;height:1px;background:rgba(255,255,255,.35)"></div><svg style="left:636px;top:0" width="220" height="30" viewBox="0 0 220 30"><defs><linearGradient id="stk" x1="0" x2="1"><stop offset="0" stop-color="#9fd0f5" stop-opacity="0"/><stop offset=".5" stop-color="#9fd0f5" stop-opacity=".55"/><stop offset="1" stop-color="#9fd0f5" stop-opacity="0"/></linearGradient></defs><path d="M30 1 Q90 4 122 30 H100 Q78 10 30 3.500Z" fill="url(#stk)"/></svg><svg style="left:4px;top:0" width="33" height="32" viewBox="-1 -1 33 32"><defs><radialGradient id="orb" cx=".5" cy=".35" r=".7"><stop offset="0" stop-color="#c9ecfd"/><stop offset=".5" stop-color="#4a9ce0"/><stop offset="1" stop-color="#1a4f9a"/></radialGradient></defs>
<circle cx="15.500" cy="15" r="14.500" fill="rgba(190,228,252,.4)"/>
<circle cx="15.500" cy="15.500" r="13" fill="url(#orb)" stroke="#0f305f" stroke-width=".8"/>
<path d="M9.500 9.500 Q12.500 8 14.700 9.300 L14 14 Q11.500 13 9 14.300Z" fill="#e8542a"/>
<path d="M16 9.300 Q19 10.500 21.800 9 L21 13.800 Q18.500 15 15.400 14Z" fill="#7fc241"/>
<path d="M8.800 15.300 Q11.300 14 13.800 15.100 L13.100 19.800 Q10.800 18.800 8.200 20Z" fill="#3a9be8"/>
<path d="M15.200 15.200 Q18.200 16.300 20.800 14.900 L20 19.600 Q17.500 21 14.500 19.900Z" fill="#f7c331"/>
<path d="M6 10 Q15.500 2 25 10 Q15.500 7 6 10Z" fill="rgba(255,255,255,.45)"/></svg><svg style="left:55px;top:5px" width="20" height="20" viewBox="0 0 20 20"><rect x="1" y="1" width="18" height="18" rx="2" fill="#8fb0d0" stroke="#6a8cb0"/><rect x="3" y="3" width="14" height="14" rx="1.500" fill="#dfe8f0"/><circle cx="10" cy="10" r="6" fill="#f08a2a" stroke="#c4601a"/><path d="M8 6.500 L13.500 10 L8 13.500Z" fill="#fff"/></svg><div class="tbtn" style="left:92px;width:38px;background:linear-gradient(180deg,rgba(175,215,245,.65) 0,rgba(130,185,235,.55) 45%,rgba(90,155,220,.5) 50%,rgba(120,185,235,.6) 100%);border:1px solid rgba(190,220,245,.7);box-shadow:0 0 0 1px rgba(20,50,90,.55)"></div><div class="abs" style="left:131px;top:2px;width:2px;height:27px;border-right:1px solid rgba(190,220,245,.6);background:rgba(100,160,220,.35)"></div><div class="abs" style="left:134px;top:2px;width:1px;height:27px;background:rgba(20,50,90,.5)"></div><div class="tbtn" style="left:137.5px;width:41px;background:linear-gradient(180deg,rgba(175,215,245,.65) 0,rgba(130,185,235,.55) 45%,rgba(90,155,220,.5) 50%,rgba(120,185,235,.6) 100%);border:1px solid rgba(190,220,245,.7);box-shadow:0 0 0 1px rgba(20,50,90,.55)"></div><div class="abs" style="left:179.5px;top:2px;width:2px;height:27px;border-right:1px solid rgba(190,220,245,.6);background:rgba(100,160,220,.35)"></div><div class="abs" style="left:182.5px;top:2px;width:1px;height:27px;background:rgba(20,50,90,.5)"></div><div class="tbtn" style="left:184px;width:45px;background:linear-gradient(180deg,rgba(175,215,245,.65) 0,rgba(130,185,235,.55) 45%,rgba(90,155,220,.5) 50%,rgba(120,185,235,.6) 100%);border:1px solid rgba(190,220,245,.7);box-shadow:0 0 0 1px rgba(20,50,90,.55)"></div><div class="tbtn" style="left:231px;width:44px;background:linear-gradient(180deg,rgba(225,240,252,.85) 0,rgba(190,220,245,.75) 45%,rgba(150,195,235,.7) 50%,rgba(185,220,245,.8) 100%);border:1px solid rgba(235,245,255,.9);box-shadow:0 0 0 1px rgba(20,50,90,.55)"></div><div class="tbtn" style="left:277.5px;width:43.5px;background:linear-gradient(180deg,rgba(175,215,245,.65) 0,rgba(130,185,235,.55) 45%,rgba(90,155,220,.5) 50%,rgba(120,185,235,.6) 100%);border:1px solid rgba(190,220,245,.7);box-shadow:0 0 0 1px rgba(20,50,90,.55)"></div><div class="tbtn" style="left:324px;width:43.5px;background:linear-gradient(180deg,rgba(175,215,245,.65) 0,rgba(130,185,235,.55) 45%,rgba(90,155,220,.5) 50%,rgba(120,185,235,.6) 100%);border:1px solid rgba(190,220,245,.7);box-shadow:0 0 0 1px rgba(20,50,90,.55)"></div><div class="tbtn" style="left:370px;width:44px;background:linear-gradient(180deg,rgba(175,215,245,.65) 0,rgba(130,185,235,.55) 45%,rgba(90,155,220,.5) 50%,rgba(120,185,235,.6) 100%);border:1px solid rgba(190,220,245,.7);box-shadow:0 0 0 1px rgba(20,50,90,.55)"></div><div class="tbtn" style="left:416px;width:41px;background:linear-gradient(180deg,rgba(175,215,245,.65) 0,rgba(130,185,235,.55) 45%,rgba(90,155,220,.5) 50%,rgba(120,185,235,.6) 100%);border:1px solid rgba(190,220,245,.7);box-shadow:0 0 0 1px rgba(20,50,90,.55)"></div><div class="abs" style="left:458px;top:2px;width:2px;height:27px;border-right:1px solid rgba(190,220,245,.6);background:rgba(100,160,220,.35)"></div><div class="abs" style="left:461px;top:2px;width:1px;height:27px;background:rgba(20,50,90,.5)"></div><div class="tbtn" style="left:463px;width:44px;background:linear-gradient(180deg,rgba(175,215,245,.65) 0,rgba(130,185,235,.55) 45%,rgba(90,155,220,.5) 50%,rgba(120,185,235,.6) 100%);border:1px solid rgba(190,220,245,.7);box-shadow:0 0 0 1px rgba(20,50,90,.55)"></div><svg style="left:97px;top:3px" width="26" height="24" viewBox="0 0 26 24"><circle cx="13" cy="13" r="8.500" fill="#3a9be0" stroke="#1f6ab0"/><path d="M8 13.500 H18.500 Q18 8 13 8 Q8.500 8.500 8 13.500 Q8.500 18.500 13.500 18 Q16.500 17.500 18 15" fill="none" stroke="#fff" stroke-width="2.200"/><path d="M3 18 Q-1 8 12 3.500 Q22 1 22.500 6" fill="none" stroke="#f2c53a" stroke-width="1.800"/></svg><svg style="left:144px;top:5px" width="26" height="22" viewBox="0 0 26 22"><path d="M2 3 H10 L12 5 H24 V19 H2Z" fill="#e8c968" stroke="#b8923a" stroke-width=".8"/><rect x="2.500" y="7" width="21" height="12" fill="#f6e7a8" stroke="#c9a94a" stroke-width=".8"/><rect x="6" y="10" width="14" height="3" fill="#bcd7ec"/><rect x="8" y="15" width="10" height="3" fill="#a9c7e0"/></svg><svg style="left:193px;top:3px" width="26" height="25" viewBox="0 0 26 25"><circle cx="13" cy="12.500" r="9.500" fill="#e8701a" stroke="#b84a10"/><circle cx="12.500" cy="11" r="5.500" fill="#2f5fb0"/><path d="M4 9 Q6 15 12 15.500 Q16 15 17.500 12 Q20 17 14 21 Q6 22 4 14Z" fill="#f2a01e"/><path d="M7 6 Q10 4 13 5.500 Q10 7 10 10 Q7 9 7 6Z" fill="#f2a01e"/></svg><svg style="left:241px;top:3px" width="24" height="24" viewBox="0 0 24 24"><rect x="1" y="1" width="22" height="22" fill="#1f78b8"/><path d="M1 7.500 H23 M16.500 1 V23" stroke="#bfe0f5" stroke-width=".8"/><path d="M6.500 9 Q11 6 15 9 V19 M15 13 Q6 12.500 6.500 16.500 Q7.500 19.500 15 17" stroke="#fff" stroke-width="2.600" fill="none"/><rect x="15" y="6" width="3" height="3" fill="none" stroke="#fff" stroke-width=".8"/></svg><svg style="left:286px;top:2px" width="26" height="26" viewBox="0 0 26 26"><ellipse cx="12" cy="15.500" rx="9.500" ry="7.500" fill="#e8eef2" stroke="#9aa8b4"/><circle cx="7.500" cy="14" r="1.800" fill="#d43a3a"/><circle cx="11" cy="11.500" r="1.800" fill="#3a7ad4"/><circle cx="15.500" cy="12" r="1.800" fill="#e8c23a"/><circle cx="9" cy="18.500" r="1.800" fill="#4aa84a"/><path d="M14 20 L22.500 4 L24 5 L16.500 21Z" fill="#c9853a" stroke="#8a5a22" stroke-width=".6"/><path d="M22.500 4 L24.500 1.500 L25 4.500Z" fill="#e8a23a"/></svg><svg style="left:333px;top:4px" width="24" height="22" viewBox="0 0 24 22"><rect x="1" y="1.500" width="22" height="18" fill="#3f7fb8" stroke="#2a5f94"/><rect x="3" y="3.500" width="18" height="13" fill="#9fd0e8"/><path d="M3 12 Q8 8 12 11 Q17 7 21 10 V16.500 H3Z" fill="#3f7a5a"/><path d="M3 14 Q10 12 21 14.500 V16.500 H3Z" fill="#dfe8ea"/></svg><svg style="left:378px;top:2px" width="28" height="27" viewBox="0 0 28 27"><ellipse cx="11" cy="8.500" rx="9" ry="6.500" fill="#6a2aa0"/><path d="M5 5 L8.500 9.500 V12.500 M12 5 L8.500 9.500" stroke="#fff" stroke-width="1.400" fill="none"/><path d="M21 2 L19.500 10 M19 12 V13.500" stroke="#6a2aa0" stroke-width="2.400"/><circle cx="15.500" cy="19" r="6.500" fill="#f6c62a" stroke="#c48a10"/><circle cx="13" cy="17" r="1" fill="#333"/><circle cx="18" cy="17" r="1" fill="#333"/><path d="M11.500 20 Q15.500 25 19.500 20Z" fill="#c43a2a"/></svg><svg style="left:426px;top:3px" width="24" height="24" viewBox="0 0 24 24"><path d="M12 1.500 L18 8 L16 12 L21 14 L15 21 L9 22 L4 16 L7 11 L6 7Z" fill="#d8322a" stroke="#a81a18" stroke-width=".8"/><path d="M11 5 L14 9 L12 13 L15 16" stroke="#ef7a6a" stroke-width="1.200" fill="none"/></svg><svg style="left:473px;top:4px" width="22" height="22" viewBox="0 0 22 22"><rect x="1" y="1" width="20" height="20" rx="1.500" fill="#f4f6f8" stroke="#5a7aa8" stroke-width="1.400"/><path d="M3 18 Q12 16 18 4 Q17 12 6 19Z" fill="#f29a1e"/><path d="M3 10 Q8 8 12 3" stroke="#8a9ab0" stroke-width="1.600" fill="none"/></svg><div class="abs" style="left:855px;top:14px;border-left:3px solid transparent;border-right:3px solid transparent;border-bottom:3.500px solid #fff"></div><svg style="left:870px;top:9px" width="14" height="14" viewBox="0 0 14 14"><path d="M1 6 Q7 1 13 5 Q7 4 1 6Z" fill="#2fa8c8"/><path d="M1 8 Q7 12 13 8 Q7 10 1 8Z" fill="#e8842a"/><path d="M2 7 Q7 6 12 7" stroke="#1f6a8a" stroke-width="1.400" fill="none"/></svg><svg style="left:888px;top:8px" width="14" height="15" viewBox="0 0 14 15"><rect x="2" y="1" width="5" height="11" fill="#c9d3dc" stroke="#7a8a9a" stroke-width=".7"/><rect x="3" y="2.500" width="3" height="1.500" fill="#5a6a7a"/><circle cx="9" cy="10" r="3.800" fill="#3aa83a" stroke="#1f7a1f" stroke-width=".6"/><path d="M7 10 L8.500 11.500 L11 8.500" stroke="#fff" stroke-width="1.200" fill="none"/></svg><svg style="left:905px;top:9px" width="15" height="14" viewBox="0 0 15 14"><rect x="1" y="1" width="5" height="4" fill="#e8eef5" stroke="#fff" stroke-width=".8"/><rect x="4.500" y="4" width="9" height="7" fill="#2a5a94" stroke="#fff" stroke-width="1"/><path d="M3 5 V12 H8" stroke="#fff" stroke-width="1" fill="none"/></svg><svg style="left:923px;top:9px" width="14" height="14" viewBox="0 0 14 14"><path d="M2.500 1 V13" stroke="#fff" stroke-width="1.400"/><path d="M3.500 2 H9.500 L8.500 4.500 H11.500 V8 H3.500Z" fill="#fff"/></svg><svg style="left:941px;top:9px" width="15" height="14" viewBox="0 0 15 14"><path d="M1 5 H3.500 L7 2 V12 L3.500 9 H1Z" fill="#fff"/><path d="M9 4.500 Q10.500 7 9 9.500 M11 3 Q13.500 7 11 11" stroke="#dfe8f3" stroke-width="1" fill="none"/></svg><div class="abs clk" style="left:956px;top:3.500px;width:60px;text-align:center;font-size:9.200px;line-height:12px;color:#fff;white-space:nowrap">1:22 PM<br>4/17/2009</div><div class="abs" style="left:1013px;top:1px;width:11px;height:29px;border-left:1px solid rgba(160,200,235,.5);background:linear-gradient(180deg,rgba(140,185,230,.45),rgba(60,110,170,.3))"></div></div>
</div></body></html>
